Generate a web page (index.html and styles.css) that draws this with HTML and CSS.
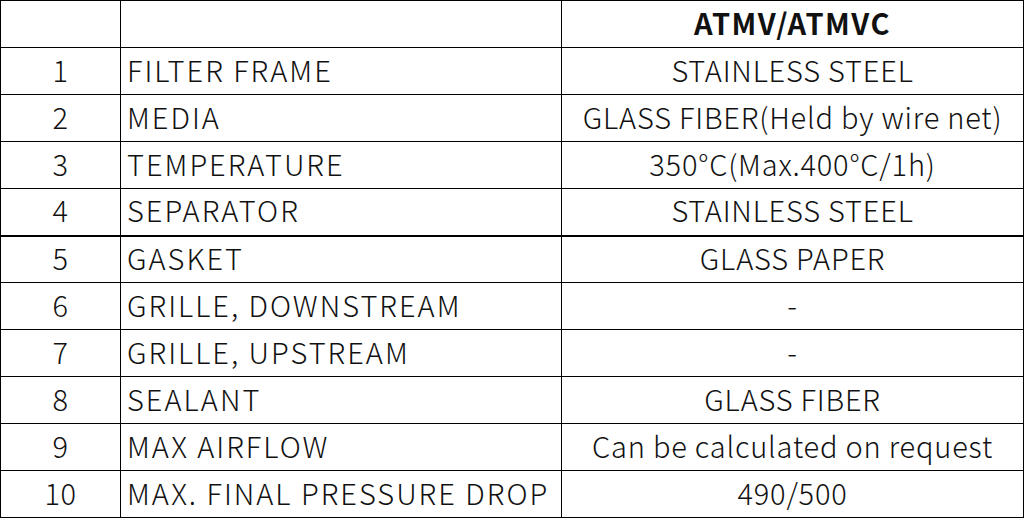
FILE: index.html
```html
<!DOCTYPE html>
<html>
<head>
<meta charset="utf-8">
<link rel="stylesheet" href="styles.css">
</head>
<body>
<table class="spec">
  <colgroup>
    <col class="c-no">
    <col class="c-item">
    <col class="c-val">
  </colgroup>
  <tr class="head"><td></td><td></td><td class="val hd">ATMV/ATMVC</td></tr>
  <tr><td class="no">1</td><td class="item">FILTER FRAME</td><td class="val">STAINLESS STEEL</td></tr>
  <tr><td class="no">2</td><td class="item">MEDIA</td><td class="val">GLASS FIBER(Held by wire net)</td></tr>
  <tr><td class="no">3</td><td class="item">TEMPERATURE</td><td class="val">350°C(Max.400°C/1h)</td></tr>
  <tr><td class="no">4</td><td class="item">SEPARATOR</td><td class="val">STAINLESS STEEL</td></tr>
  <tr class="thick"><td class="no">5</td><td class="item">GASKET</td><td class="val">GLASS PAPER</td></tr>
  <tr><td class="no">6</td><td class="item">GRILLE, DOWNSTREAM</td><td class="val">-</td></tr>
  <tr><td class="no">7</td><td class="item">GRILLE, UPSTREAM</td><td class="val">-</td></tr>
  <tr><td class="no">8</td><td class="item">SEALANT</td><td class="val">GLASS FIBER</td></tr>
  <tr><td class="no">9</td><td class="item">MAX AIRFLOW</td><td class="val">Can be calculated on request</td></tr>
  <tr><td class="no">10</td><td class="item">MAX. FINAL PRESSURE DROP</td><td class="val">490/500</td></tr>
</table>
</body>
</html>
```
FILE: styles.css
```css
html, body {
  margin: 0;
  padding: 0;
  background: #fff;
}
body {
  font-family: "Noto Sans CJK JP", "Noto Sans", sans-serif;
  color: #111;
}
.spec {
  border-collapse: collapse;
  width: 1023px;
  table-layout: fixed;
}
.c-no { width: 120px; }
.c-item { width: 441px; }
.c-val { width: 462px; }
.spec td {
  box-sizing: border-box;
  border: 1px solid #000;
  height: 47px;
  padding: 0 0 4px 6px;
  font-size: 29px;
  font-weight: 300;
  letter-spacing: 0.5px;
  line-height: 1;
  vertical-align: middle;
  white-space: nowrap;
}
.spec td.item {
  letter-spacing: 2px;
}
.spec td.no,
.spec td.val {
  text-align: center;
  padding-left: 0;
}
.spec td.val {
  letter-spacing: 0.8px;
}
.spec td.hd {
  font-weight: 700;
  letter-spacing: 1.5px;
}
.spec tr.thick td {
  border-top-width: 2px;
}
```
